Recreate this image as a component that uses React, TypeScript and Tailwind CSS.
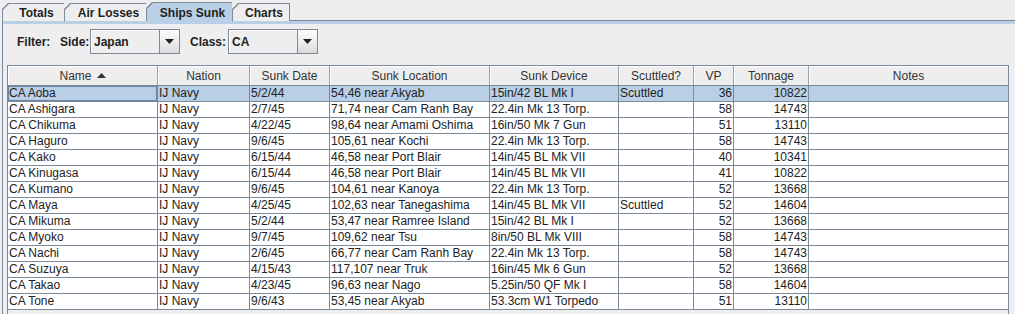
import React from 'react';

type Row = {
  name: string;
  nation: string;
  date: string;
  location: string;
  device: string;
  scuttled: string;
  vp: number;
  tonnage: number;
};

const rows: Row[] = [
  { name: 'CA Aoba', nation: 'IJ Navy', date: '5/2/44', location: '54,46 near Akyab', device: '15in/42 BL Mk I', scuttled: 'Scuttled', vp: 36, tonnage: 10822 },
  { name: 'CA Ashigara', nation: 'IJ Navy', date: '2/7/45', location: '71,74 near Cam Ranh Bay', device: '22.4in Mk 13 Torp.', scuttled: '', vp: 58, tonnage: 14743 },
  { name: 'CA Chikuma', nation: 'IJ Navy', date: '4/22/45', location: '98,64 near Amami Oshima', device: '16in/50 Mk 7 Gun', scuttled: '', vp: 51, tonnage: 13110 },
  { name: 'CA Haguro', nation: 'IJ Navy', date: '9/6/45', location: '105,61 near Kochi', device: '22.4in Mk 13 Torp.', scuttled: '', vp: 58, tonnage: 14743 },
  { name: 'CA Kako', nation: 'IJ Navy', date: '6/15/44', location: '46,58 near Port Blair', device: '14in/45 BL Mk VII', scuttled: '', vp: 40, tonnage: 10341 },
  { name: 'CA Kinugasa', nation: 'IJ Navy', date: '6/15/44', location: '46,58 near Port Blair', device: '14in/45 BL Mk VII', scuttled: '', vp: 41, tonnage: 10822 },
  { name: 'CA Kumano', nation: 'IJ Navy', date: '9/6/45', location: '104,61 near Kanoya', device: '22.4in Mk 13 Torp.', scuttled: '', vp: 52, tonnage: 13668 },
  { name: 'CA Maya', nation: 'IJ Navy', date: '4/25/45', location: '102,63 near Tanegashima', device: '14in/45 BL Mk VII', scuttled: 'Scuttled', vp: 52, tonnage: 14604 },
  { name: 'CA Mikuma', nation: 'IJ Navy', date: '5/2/44', location: '53,47 near Ramree Island', device: '15in/42 BL Mk I', scuttled: '', vp: 52, tonnage: 13668 },
  { name: 'CA Myoko', nation: 'IJ Navy', date: '9/7/45', location: '109,62 near Tsu', device: '8in/50 BL Mk VIII', scuttled: '', vp: 58, tonnage: 14743 },
  { name: 'CA Nachi', nation: 'IJ Navy', date: '2/6/45', location: '66,77 near Cam Ranh Bay', device: '22.4in Mk 13 Torp.', scuttled: '', vp: 58, tonnage: 14743 },
  { name: 'CA Suzuya', nation: 'IJ Navy', date: '4/15/43', location: '117,107 near Truk', device: '16in/45 Mk 6 Gun', scuttled: '', vp: 52, tonnage: 13668 },
  { name: 'CA Takao', nation: 'IJ Navy', date: '4/23/45', location: '96,63 near Nago', device: '5.25in/50 QF Mk I', scuttled: '', vp: 58, tonnage: 14604 },
  { name: 'CA Tone', nation: 'IJ Navy', date: '9/6/43', location: '53,45 near Akyab', device: '53.3cm W1 Torpedo', scuttled: '', vp: 51, tonnage: 13110 },
];

const Tab: React.FC<{ label: string; width: string; selected?: boolean; last?: boolean }> = ({ label, width, selected, last }) => (
  <div
    className={`relative ${width} ${selected ? 'h-[19px] z-10' : 'h-[18px] mt-px'} bg-[#7a8a99] [clip-path:polygon(0_6px,6px_0,100%_0,100%_100%,0_100%)]`}
  >
    <div
      className={`absolute top-px left-px bottom-0 ${last ? 'right-px' : 'right-0'} ${selected ? 'bg-[#b8cfe5]' : 'bg-[#eeeeee]'} [clip-path:polygon(0_6px,6px_0,100%_0,100%_100%,0_100%)] flex items-start justify-center font-bold text-[12px] text-[#222]`}
    >
      <span className={`pl-[6px] ${selected ? 'pt-[1px]' : ''}`}>{label}</span>
    </div>
  </div>
);

const ComboBox: React.FC<{ value: string }> = ({ value }) => (
  <div className="flex h-[25px] w-[90px]">
    <div className="flex-1 flex items-center border border-[#7a8a99] bg-[#eeeeee] shadow-[inset_1px_1px_0_#ffffff] pl-[3px] font-bold text-[12px] text-[#222]">
      {value}
    </div>
    <div className="w-[20px] flex items-center justify-center border border-l-0 border-[#7a8a99] bg-gradient-to-b from-[#fbfbfb] via-[#eeeeee] to-[#dadada]">
      <svg width="9" height="5" viewBox="0 0 9 5">
        <path d="M0 0 H9 L4.5 5 Z" fill="#222" />
      </svg>
    </div>
  </div>
);

const cols = [
  { key: 'name', title: 'Name', w: 'w-[150px]', align: 'left' },
  { key: 'nation', title: 'Nation', w: 'w-[92px]', align: 'left' },
  { key: 'date', title: 'Sunk Date', w: 'w-[80px]', align: 'left' },
  { key: 'location', title: 'Sunk Location', w: 'w-[160px]', align: 'left' },
  { key: 'device', title: 'Sunk Device', w: 'w-[129px]', align: 'left' },
  { key: 'scuttled', title: 'Scuttled?', w: 'w-[75px]', align: 'left' },
  { key: 'vp', title: 'VP', w: 'w-[40px]', align: 'right' },
  { key: 'tonnage', title: 'Tonnage', w: 'w-[75px]', align: 'right' },
  { key: 'notes', title: 'Notes', w: 'w-[199px]', align: 'left' },
] as const;

export default function App() {
  return (
    <div className="w-[1015px] h-[314px] overflow-hidden bg-[#eeeeee] font-['Liberation_Sans',Arial,sans-serif] text-[12px] text-[#222]">
      {/* tab strip */}
      <div className="relative h-[21px] pt-[2px] pl-[2px] flex items-start">
        <div className="absolute left-[2px] right-0 bottom-0 h-px bg-[#7a8a99]" />
        <Tab label="Totals" width="w-[62px]" />
        <Tab label="Air Losses" width="w-[82px]" />
        <Tab label="Ships Sunk" width="w-[86px]" selected />
        <Tab label="Charts" width="w-[58px]" last />
      </div>

      {/* content panel */}
      <div className="ml-[2px] border-l border-[#7a8a99] h-[400px]">
        <div className="h-[3px] bg-[#b8cfe5]" />
        <div className="flex items-start h-[41px] pt-[5px] pl-[14px] font-bold">
          <div className="w-[43px] h-[25px] flex items-center">Filter:</div>
          <div className="w-[30px] h-[25px] flex items-center">Side:</div>
          <ComboBox value="Japan" />
          <div className="ml-[10px] w-[38px] h-[25px] flex items-center">Class:</div>
          <ComboBox value="CA" />
        </div>

        {/* table */}
        <div className="ml-[4px] w-[1002px] h-[260px] border border-[#7a8a99] bg-[#eeeeee]">
          <div className="flex h-[20px] border-b border-[#7a8a99] bg-[#eeeeee] text-[#333]">
            {cols.map((c, i) => (
              <div
                key={c.key}
                className={`${c.w} ${i < cols.length - 1 ? 'border-r border-[#9aa3ad]' : ''} flex items-center justify-center gap-[5px] shadow-[inset_1px_1px_0_#ffffff]`}
              >
                <span>{c.title}</span>
                {c.key === 'name' && (
                  <svg width="9" height="5" viewBox="0 0 9 5">
                    <path d="M0 5 H9 L4.5 0 Z" fill="#333" />
                  </svg>
                )}
              </div>
            ))}
          </div>
          {rows.map((r, ri) => {
            const selected = ri === 0;
            const values: Record<string, string> = {
              name: r.name,
              nation: r.nation,
              date: r.date,
              location: r.location,
              device: r.device,
              scuttled: r.scuttled,
              vp: String(r.vp),
              tonnage: String(r.tonnage),
              notes: '',
            };
            return (
              <div key={r.name} className={`flex h-[16px] border-b border-[#7a8a99] ${selected ? 'bg-[#b8cfe5]' : 'bg-white'}`}>
                {cols.map((c, i) => (
                  <div
                    key={c.key}
                    className={`${c.w} ${i < cols.length - 1 ? 'border-r border-[#7a8a99]' : ''} ${
                      c.align === 'right' ? 'text-right pr-[1px]' : 'text-left pl-[1px]'
                    } ${selected && i === 0 ? 'shadow-[inset_0_0_0_1px_#6d84a6]' : ''} leading-[15px] whitespace-nowrap overflow-hidden`}
                  >
                    {values[c.key]}
                  </div>
                ))}
              </div>
            );
          })}
        </div>
      </div>
    </div>
  );
}
